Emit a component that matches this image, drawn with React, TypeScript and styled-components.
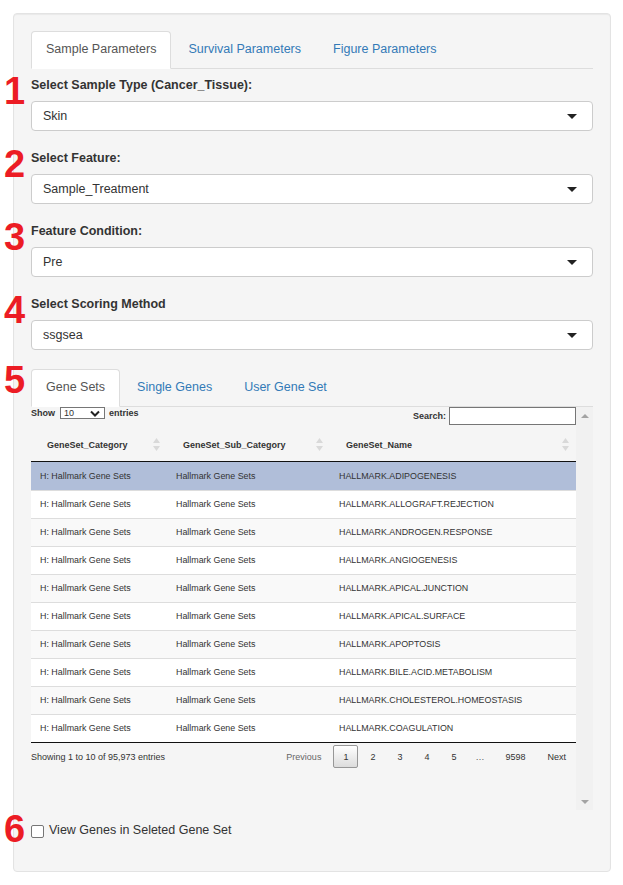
import React from "react";
import styled, { createGlobalStyle, css } from "styled-components";

const GlobalStyle = createGlobalStyle`
  html, body { margin: 0; padding: 0; background: #fff; }
  body {
    font-family: "Liberation Sans", Arial, Helvetica, sans-serif;
    font-size: 12.5px;
    color: #333;
  }
  *, *::before, *::after { box-sizing: border-box; }
`;

const Page = styled.div`
  padding: 13px 12px 13px 13px;
`;

const Well = styled.div`
  width: 598px;
  background: #f5f5f5;
  border: 1px solid #e3e3e3;
  border-radius: 4px;
  box-shadow: inset 0 1px 1px rgba(0, 0, 0, 0.05);
  padding: 17px 17px 31px;
`;

const TabList = styled.div`
  display: flex;
  height: 38px;
  border-bottom: 1px solid #ddd;
`;

const Tab = styled.div<{ $active?: boolean }>`
  height: 38px;
  margin-bottom: -1px;
  margin-right: 2px;
  padding: 0 14px 2px;
  display: flex;
  align-items: center;
  border: 1px solid transparent;
  border-radius: 4px 4px 0 0;
  color: #337ab7;
  white-space: nowrap;
  ${(p) =>
    p.$active &&
    css`
      background: #fff;
      color: #555;
      border-color: #ddd #ddd transparent;
    `}
`;

const TabContent = styled.div`
  padding-top: 8px;
`;

const FormGroup = styled.div`
  position: relative;
  margin-bottom: 19px;
`;

const Marker = styled.div<{ $top: number }>`
  position: absolute;
  left: -27px;
  top: ${(p) => p.$top}px;
  font-family: "Liberation Sans", Arial, sans-serif;
  font-size: 38px;
  font-weight: bold;
  line-height: 38px;
  color: #ec1c24;
`;

const Label = styled.div`
  font-weight: bold;
  line-height: 17px;
  margin-bottom: 7px;
`;

const SelectBox = styled.div`
  height: 30px;
  background: #fff;
  border: 1px solid #ccc;
  border-radius: 4px;
  padding: 0 15px 0 11px;
  display: flex;
  align-items: center;
  justify-content: space-between;
  color: #333;
`;

const Caret = styled.span`
  width: 0;
  height: 0;
  border-left: 5px solid transparent;
  border-right: 5px solid transparent;
  border-top: 5px solid #222;
`;

const Section = styled.div`
  position: relative;
`;

const ScrollArea = styled.div`
  display: flex;
  height: 403px;
`;

const TableArea = styled.div`
  flex: 1;
  min-width: 0;
`;

const ScrollTrack = styled.div`
  width: 17px;
  background: #f1f1f1;
  display: flex;
  flex-direction: column;
  justify-content: space-between;
  align-items: center;
  padding: 7px 0 6px;
`;

const Arrow = styled.span<{ $down?: boolean }>`
  width: 0;
  height: 0;
  border-left: 4px solid transparent;
  border-right: 4px solid transparent;
  ${(p) =>
    p.$down
      ? css`border-top: 4px solid #a3a3a3;`
      : css`border-bottom: 4px solid #a3a3a3;`}
`;

const TopBar = styled.div`
  display: flex;
  justify-content: space-between;
  align-items: flex-start;
  height: 21px;
  font-size: 9px;
  font-weight: bold;
`;

const LengthLabel = styled.div`
  display: flex;
  align-items: center;
  gap: 4px;
  height: 12px;
`;

const MiniSelect = styled.span`
  width: 45px;
  height: 12px;
  margin-left: 1px;
  background: #fff;
  border: 1px solid #767676;
  display: flex;
  align-items: center;
  justify-content: space-between;
  padding: 0 4px 0 3px;
  font-weight: normal;
  font-size: 9px;
`;

const SearchLabel = styled.div`
  display: flex;
  align-items: center;
  gap: 3px;
`;

const SearchInput = styled.input`
  width: 127px;
  height: 18px;
  margin: 0;
  padding: 0 2px;
  border: 1px solid #767676;
  background: #fff;
  font-size: 9px;
  outline: none;
`;

const cols = "136px 163px 1fr";

const HeaderRow = styled.div`
  display: grid;
  grid-template-columns: ${cols};
  height: 34px;
  border-bottom: 1px solid #111;
`;

const HeaderCell = styled.div`
  display: flex;
  align-items: center;
  justify-content: space-between;
  padding: 0 7px 0 16px;
  font-size: 9px;
  font-weight: bold;
  color: #333;
  white-space: nowrap;
`;

const Body = styled.div`
  border-bottom: 1px solid #111;
`;

const Row = styled.div<{ $bg: string; $first?: boolean }>`
  display: grid;
  grid-template-columns: ${cols};
  height: 28px;
  background: ${(p) => p.$bg};
  border-top: ${(p) => (p.$first ? "none" : "1px solid #ddd")};
`;

const Cell = styled.div`
  display: flex;
  align-items: center;
  padding: 0 0 1px 9px;
  font-size: 8.9px;
  color: #333;
  white-space: nowrap;
`;

const Footer = styled.div`
  display: flex;
  justify-content: space-between;
  align-items: flex-start;
  font-size: 9px;
`;

const Info = styled.div`
  padding-top: 8px;
  line-height: 12px;
`;

const Pager = styled.div`
  display: flex;
  padding-top: 2px;
`;

const PageButton = styled.span<{ $current?: boolean; $disabled?: boolean }>`
  height: 23px;
  display: flex;
  align-items: center;
  padding: 0 9px;
  margin-left: 2px;
  border: 1px solid transparent;
  border-radius: 2px;
  color: ${(p) => (p.$disabled ? "#666" : "#333")};
  ${(p) =>
    p.$current &&
    css`
      border-color: #979797;
      background: linear-gradient(to bottom, #fff 0%, #dcdcdc 100%);
    `}
`;

const Ellipsis = styled.span`
  height: 23px;
  display: flex;
  align-items: center;
  padding: 0 9px;
  color: #555;
`;

const CheckRow = styled.div`
  position: relative;
  display: flex;
  align-items: center;
  gap: 5px;
  height: 18px;
  margin-top: 12px;
`;

const CheckBox = styled.span`
  width: 13px;
  height: 13px;
  background: #fff;
  border: 1px solid #767676;
  border-radius: 2px;
`;

const CheckText = styled.span`
  margin-top: -3px;
`;

const SortIcon = () => (
  <svg width="7" height="13" viewBox="0 0 7 13">
    <path d="M3.5 0 L7 5 L0 5 Z" fill="#d9d9d9" />
    <path d="M3.5 13 L7 8 L0 8 Z" fill="#d9d9d9" />
  </svg>
);

const Chevron = () => (
  <svg width="10" height="7" viewBox="0 0 10 7">
    <polyline points="1,1.5 5,5.5 9,1.5" fill="none" stroke="#222" strokeWidth="2" />
  </svg>
);

const names = [
  "HALLMARK.ADIPOGENESIS",
  "HALLMARK.ALLOGRAFT.REJECTION",
  "HALLMARK.ANDROGEN.RESPONSE",
  "HALLMARK.ANGIOGENESIS",
  "HALLMARK.APICAL.JUNCTION",
  "HALLMARK.APICAL.SURFACE",
  "HALLMARK.APOPTOSIS",
  "HALLMARK.BILE.ACID.METABOLISM",
  "HALLMARK.CHOLESTEROL.HOMEOSTASIS",
  "HALLMARK.COAGULATION",
];

const fields = [
  { n: "1", label: "Select Sample Type (Cancer_Tissue):", value: "Skin" },
  { n: "2", label: "Select Feature:", value: "Sample_Treatment" },
  { n: "3", label: "Feature Condition:", value: "Pre" },
  { n: "4", label: "Select Scoring Method", value: "ssgsea" },
];

export default function App() {
  return (
    <>
      <GlobalStyle />
      <Page>
        <Well>
          <TabList>
            <Tab $active>Sample Parameters</Tab>
            <Tab>Survival Parameters</Tab>
            <Tab>Figure Parameters</Tab>
          </TabList>
          <TabContent>
            {fields.map((f) => (
              <FormGroup key={f.n}>
                <Marker $top={-5}>{f.n}</Marker>
                <Label>{f.label}</Label>
                <SelectBox>
                  <span>{f.value}</span>
                  <Caret />
                </SelectBox>
              </FormGroup>
            ))}
            <Section>
              <Marker $top={-8}>5</Marker>
              <TabList>
                <Tab $active>Gene Sets</Tab>
                <Tab>Single Genes</Tab>
                <Tab>User Gene Set</Tab>
              </TabList>
              <ScrollArea>
                <TableArea>
                  <TopBar>
                    <LengthLabel>
                      Show
                      <MiniSelect>
                        10
                        <Chevron />
                      </MiniSelect>
                      entries
                    </LengthLabel>
                    <SearchLabel>
                      Search:
                      <SearchInput type="search" />
                    </SearchLabel>
                  </TopBar>
                  <HeaderRow>
                    <HeaderCell>
                      GeneSet_Category
                      <SortIcon />
                    </HeaderCell>
                    <HeaderCell>
                      GeneSet_Sub_Category
                      <SortIcon />
                    </HeaderCell>
                    <HeaderCell>
                      GeneSet_Name
                      <SortIcon />
                    </HeaderCell>
                  </HeaderRow>
                  <Body>
                    {names.map((name, i) => (
                      <Row
                        key={name}
                        $first={i === 0}
                        $bg={i === 0 ? "#b0bed9" : i % 2 === 1 ? "#fff" : "#f9f9f9"}
                      >
                        <Cell>H: Hallmark Gene Sets</Cell>
                        <Cell>Hallmark Gene Sets</Cell>
                        <Cell>{name}</Cell>
                      </Row>
                    ))}
                  </Body>
                  <Footer>
                    <Info>Showing 1 to 10 of 95,973 entries</Info>
                    <Pager>
                      <PageButton $disabled>Previous</PageButton>
                      <PageButton $current>1</PageButton>
                      <PageButton>2</PageButton>
                      <PageButton>3</PageButton>
                      <PageButton>4</PageButton>
                      <PageButton>5</PageButton>
                      <Ellipsis>…</Ellipsis>
                      <PageButton>9598</PageButton>
                      <PageButton>Next</PageButton>
                    </Pager>
                  </Footer>
                </TableArea>
                <ScrollTrack>
                  <Arrow />
                  <Arrow $down />
                </ScrollTrack>
              </ScrollArea>
            </Section>
            <CheckRow>
              <Marker $top={-12}>6</Marker>
              <CheckBox />
              <CheckText>View Genes in Seleted Gene Set</CheckText>
            </CheckRow>
          </TabContent>
        </Well>
      </Page>
    </>
  );
}
